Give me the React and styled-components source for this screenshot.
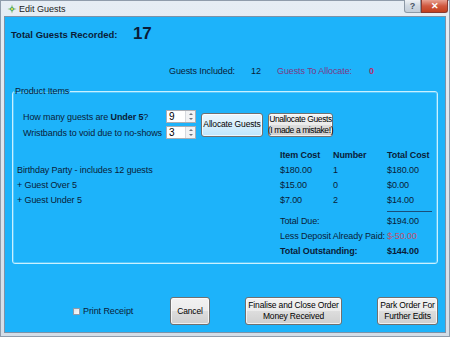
import React from "react";
import styled, { createGlobalStyle } from "styled-components";

const Global = createGlobalStyle`
  html, body { margin: 0; padding: 0; }
  body { font-family: "Liberation Sans", Arial, sans-serif; background: #fff; }
`;

const ink = "#0a1c38";

const Frame = styled.div`
  width: 450px;
  height: 337px;
  box-sizing: border-box;
  background: linear-gradient(#e6edf4, #d4dee8);
  border: 1px solid #8f9cab;
  padding: 0 3px 3px;
  display: flex;
  flex-direction: column;
`;

const TitleBar = styled.div`
  height: 15px;
  display: flex;
  align-items: center;
  position: relative;
`;

const TitleText = styled.span`
  font-size: 9px;
  color: #1a1a1a;
  margin-left: 2px;
`;

const Caption = styled.div`
  position: absolute;
  top: -1px;
  right: -2px;
  display: flex;
`;

const CapButton = styled.div`
  height: 13px;
  width: ${(p) => p.w}px;
  box-sizing: border-box;
  border: 1px solid ${(p) => (p.red ? "#8a3a30" : "#8d99a6")};
  border-top: none;
  border-radius: ${(p) => (p.red ? "0 0 3px 0" : "0 0 0 3px")};
  background: ${(p) =>
    p.red
      ? "linear-gradient(#e8a293, #d0583f 50%, #c2401f)"
      : "linear-gradient(#eef2f6, #cfd8e2 50%, #c3ced9)"};
  color: ${(p) => (p.red ? "#fff" : "#4a5563")};
  font-size: 9px;
  font-weight: bold;
  display: flex;
  align-items: center;
  justify-content: center;
`;

const Client = styled.div`
  flex: 1;
  background: #1db3fa;
  border: 1px solid #7c92a8;
  display: flex;
  flex-direction: column;
  color: ${ink};
  font-size: 9px;
  letter-spacing: -0.1px;
`;

const Header = styled.div`
  display: flex;
  align-items: center;
  height: 18px;
  padding: 8px 0 0 6px;
  font-weight: bold;
`;

const HeaderLabel = styled.span`
  width: 122px;
  font-size: 9.5px;
  letter-spacing: 0;
`;

const BigNum = styled.span`
  font-size: 17px;
`;

const Summary = styled.div`
  display: flex;
  align-items: center;
  height: 14px;
  margin-top: 21px;
  padding-left: 164px;
`;

const Cell = styled.span`
  width: ${(p) => (p.w ? `${p.w}px` : "auto")};
  color: ${(p) => p.color || ink};
  font-weight: ${(p) => (p.bold ? "bold" : "normal")};
  line-height: 15px;
  flex-shrink: 0;
  white-space: nowrap;
`;

const Group = styled.fieldset`
  margin: 7px 0 0 7px;
  width: 426px;
  box-sizing: border-box;
  padding: 0 0 4px 0;
  border: 1px solid #c9f1ff;
  border-radius: 3px;
  box-shadow: inset 0 0 0 1px rgba(255, 255, 255, 0.25);
  min-width: 0;
`;

const Legend = styled.legend`
  margin-left: 1px;
  padding: 0 1px;
  font-size: 9px;
  line-height: 12px;
  color: ${ink};
`;

const Controls = styled.div`
  display: flex;
  align-items: center;
  margin-top: 13px;
  padding-left: 10px;
`;

const Fields = styled.div`
  display: flex;
  flex-direction: column;
  gap: 3px;
  width: 178px;
`;

const FieldRow = styled.div`
  display: flex;
  align-items: center;
  height: 13px;
`;

const FieldLabel = styled.span`
  width: 143px;
  white-space: nowrap;
`;

const Spin = styled.div`
  width: 30px;
  height: 13px;
  box-sizing: border-box;
  background: #fff;
  border: 1px solid #abadb3;
  display: flex;
  font-size: 10px;
  color: #000;
`;

const SpinValue = styled.span`
  flex: 1;
  padding-left: 2px;
  line-height: 11px;
`;

const SpinArrows = styled.div`
  width: 9px;
  display: flex;
  flex-direction: column;
  border-left: 1px solid #d6d9de;
  background: #f1f2f4;
`;

const Arrow = styled.div`
  flex: 1;
  display: flex;
  align-items: center;
  justify-content: center;
  &::after {
    content: "";
    border-left: 2px solid transparent;
    border-right: 2px solid transparent;
    ${(p) => (p.up ? "border-bottom" : "border-top")}: 2px solid #6b7380;
  }
`;

const Button = styled.button`
  width: ${(p) => p.w}px;
  height: ${(p) => p.h}px;
  margin-left: ${(p) => p.ml || 0}px;
  padding: 0;
  box-sizing: border-box;
  border: 1px solid #707070;
  border-radius: 3px;
  background: ${(p) =>
    p.hot
      ? "linear-gradient(#eaf6fd, #d9f0fc 50%, #bee6fd)"
      : "linear-gradient(#f2f2f2, #ebebeb 50%, #dddddd 51%, #cfcfcf)"};
  box-shadow: inset 0 0 0 1px rgba(255, 255, 255, 0.7);
  font-family: inherit;
  font-size: 8.5px;
  letter-spacing: ${(p) => (p.tight ? "-0.4px" : "-0.15px")};
  line-height: 11px;
  white-space: nowrap;
  color: #000;
  flex-shrink: 0;
  display: flex;
  flex-direction: column;
  align-items: center;
  justify-content: center;
`;

const Table = styled.div`
  display: grid;
  grid-template-columns: 263px 53px 54px 50px;
  align-items: center;
  margin-top: 9px;
  padding-left: 4px;
`;

const Span2 = styled(Cell)`
  grid-column: 2 / span 2;
`;

const RuleRow = styled.div`
  grid-column: 4;
  height: 6px;
  display: flex;
  align-items: center;
  &::after {
    content: "";
    width: 45px;
    height: 1px;
    background: #1a4f7a;
  }
`;

const Footer = styled.div`
  display: flex;
  align-items: center;
  margin-top: 33px;
  padding-left: 68px;
`;

const Check = styled.label`
  width: 97px;
  display: flex;
  align-items: center;
  gap: 3px;
  white-space: nowrap;
`;

const Box = styled.span`
  width: 7px;
  height: 7px;
  box-sizing: border-box;
  border: 1px solid #8e9bab;
  background: linear-gradient(135deg, #dfe3e8, #fafafa);
`;

const AppIcon = () => (
  <svg width="10" height="10" viewBox="0 0 10 10" style={{ marginLeft: 3 }}>
    <circle cx="5" cy="5" r="2" fill="#3a9bd8" />
    <path d="M5 0.5 L6 4 L9.5 5 L6 6 L5 9.5 L4 6 L0.5 5 L4 4 Z" fill="#5fb04a" opacity="0.85" />
    <circle cx="5" cy="5" r="1" fill="#f4e24a" />
  </svg>
);

const SpinBox = ({ value }) => (
  <Spin>
    <SpinValue>{value}</SpinValue>
    <SpinArrows>
      <Arrow up />
      <Arrow />
    </SpinArrows>
  </Spin>
);

const lines = [
  ["Birthday Party - includes 12 guests", "$180.00", "1", "$180.00"],
  ["+ Guest Over 5", "$15.00", "0", "$0.00"],
  ["+ Guest Under 5", "$7.00", "2", "$14.00"],
];

export default function App() {
  return (
    <>
      <Global />
      <Frame>
        <TitleBar>
          <AppIcon />
          <TitleText>Edit Guests</TitleText>
          <Caption>
            <CapButton w={17}>?</CapButton>
            <CapButton w={27} red>
              ✕
            </CapButton>
          </Caption>
        </TitleBar>
        <Client>
          <Header>
            <HeaderLabel>Total Guests Recorded:</HeaderLabel>
            <BigNum>17</BigNum>
          </Header>
          <Summary>
            <Cell w={82}>Guests Included:</Cell>
            <Cell w={26}>12</Cell>
            <Cell w={92} color="#7b3a86">
              Guests To Allocate:
            </Cell>
            <Cell bold color="#b2306c">
              0
            </Cell>
          </Summary>
          <Group>
            <Legend>Product Items</Legend>
            <Controls>
              <Fields>
                <FieldRow>
                  <FieldLabel>
                    How many guests are <b>Under 5</b>?
                  </FieldLabel>
                  <SpinBox value="9" />
                </FieldRow>
                <FieldRow>
                  <FieldLabel>Wristbands to void due to no-shows</FieldLabel>
                  <SpinBox value="3" />
                </FieldRow>
              </Fields>
              <Button w={62} h={24} hot>
                Allocate Guests
              </Button>
              <Button w={65} h={24} ml={5} tight>
                <span>Unallocate Guests</span>
                <span>(I made a mistake!)</span>
              </Button>
            </Controls>
            <Table>
              <Cell />
              <Cell bold>Item Cost</Cell>
              <Cell bold>Number</Cell>
              <Cell bold>Total Cost</Cell>
              {lines.map((row) =>
                row.map((text, i) => <Cell key={row[0] + i}>{text}</Cell>)
              )}
              <RuleRow />
              <Cell />
              <Span2>Total Due:</Span2>
              <Cell>$194.00</Cell>
              <Cell />
              <Span2>Less Deposit Already Paid:</Span2>
              <Cell color="#c0506e">$-50.00</Cell>
              <Cell />
              <Span2 bold>Total Outstanding:</Span2>
              <Cell bold>$144.00</Cell>
            </Table>
          </Group>
          <Footer>
            <Check>
              <Box />
              Print Receipt
            </Check>
            <Button w={40} h={28}>
              Cancel
            </Button>
            <Button w={97} h={28} ml={35}>
              <span>Finalise and Close Order</span>
              <span>Money Received</span>
            </Button>
            <Button w={61} h={28} ml={35}>
              <span>Park Order For</span>
              <span>Further Edits</span>
            </Button>
          </Footer>
        </Client>
      </Frame>
    </>
  );
}
